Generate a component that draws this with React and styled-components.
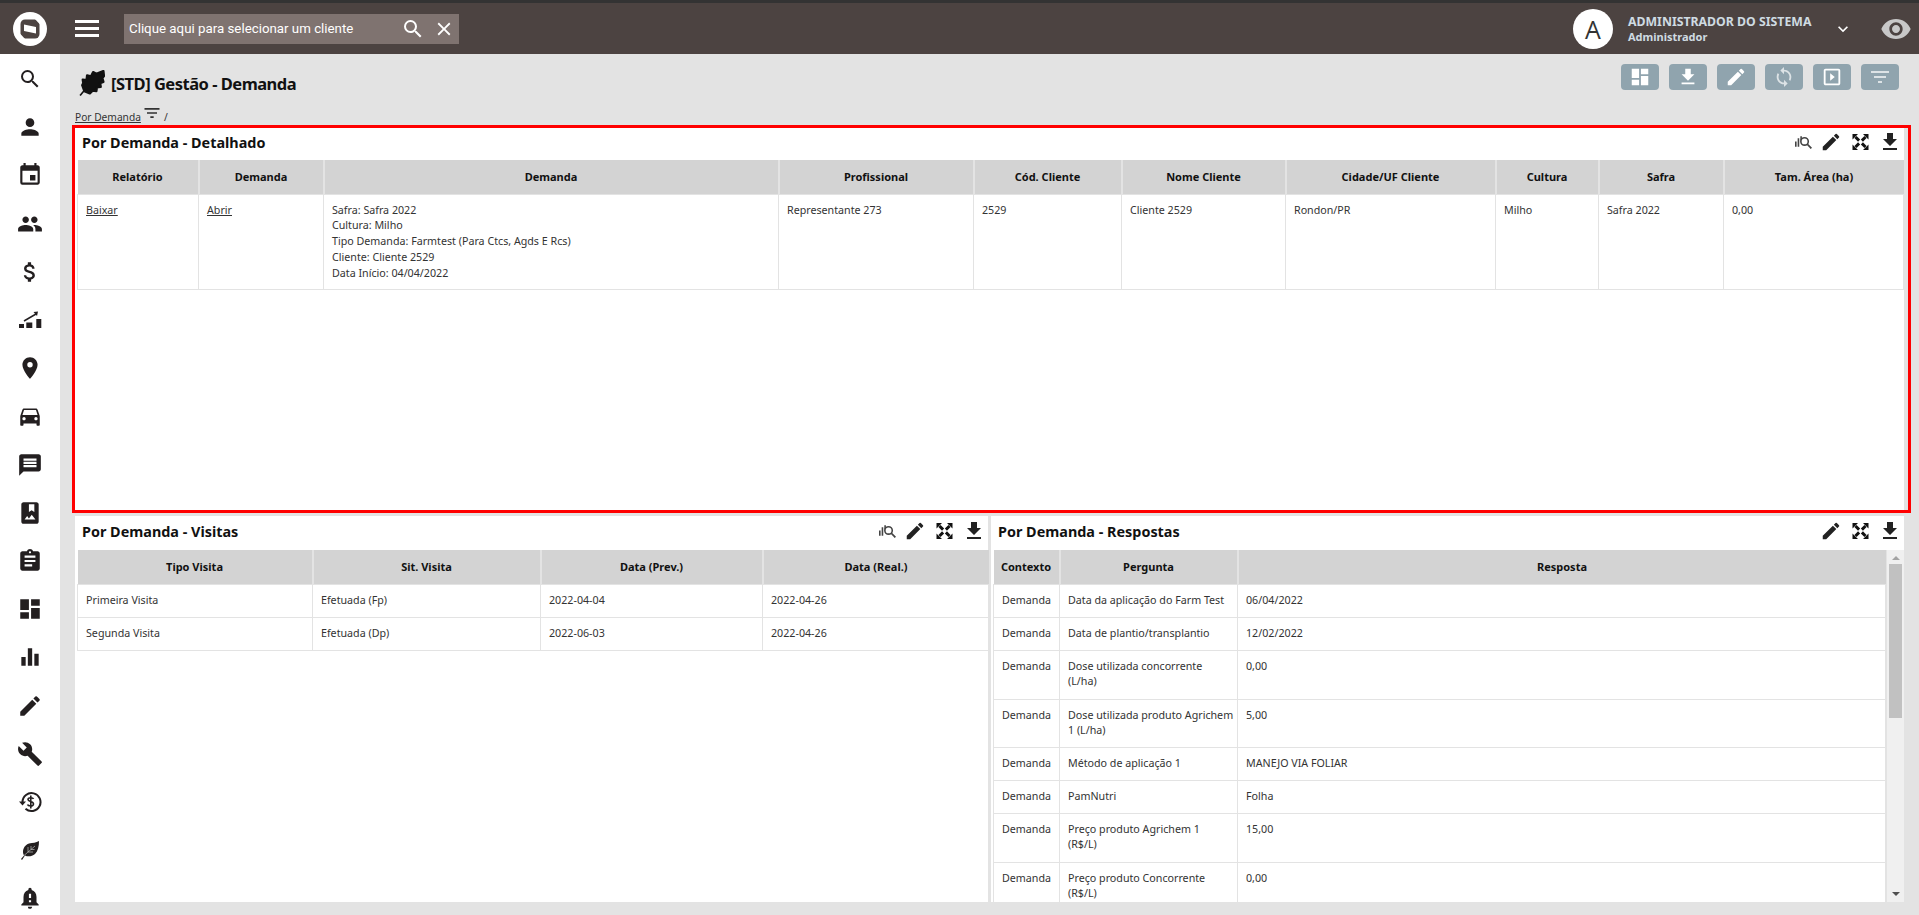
import React from 'react';
import styled, { createGlobalStyle } from 'styled-components';
import {
  MdSearch, MdClose, MdPerson, MdEvent, MdPeople, MdAttachMoney, MdPlace, MdDirectionsCar, MdMessage,
  MdPhotoAlbum, MdAssignment, MdDashboard, MdEqualizer, MdEdit, MdBuild, MdNotificationImportant,
  MdFileDownload, MdSync, MdOutlineSlideshow, MdFilterList, MdVisibility, MdKeyboardArrowDown,
} from 'react-icons/md';

const GlobalStyle = createGlobalStyle`
  html, body { margin: 0; height: 100%; overflow: hidden; background: #e3e3e3; }
  * { box-sizing: border-box; }
  body { font-family: "Noto Sans", "DejaVu Sans", sans-serif; font-size: 10.7px; color: #222; }
`;

const Page = styled.div`
  width: 1919px;
  height: 915px;
  display: flex;
  flex-direction: column;
  overflow: hidden;
`;

const Topbar = styled.header`
  height: 54px;
  flex: none;
  display: flex;
  align-items: center;
  background: #4c4341;
  border-top: 3px solid #333;
  padding: 0 7px 0 13px;
`;

const Burger = styled.div`
  width: 24px;
  height: 17px;
  margin-left: 28px;
  margin-right: 25px;
  border-top: 3px solid #fff;
  border-bottom: 3px solid #fff;
  display: flex;
  align-items: center;
  &::before { content: ''; display: block; width: 100%; height: 3px; background: #fff; }
`;

const SearchBox = styled.div`
  width: 335px;
  height: 30px;
  background: #7f7370;
  display: flex;
  align-items: center;
  padding: 0 4px 0 5px;
  color: #fff;
  font-family: Roboto, "Liberation Sans", sans-serif;
  font-size: 13.3px;
  span { flex: 1; }
  svg { margin-left: 8px; }
`;

const UserArea = styled.div`
  margin-left: auto;
  display: flex;
  align-items: center;
`;

const Avatar = styled.div`
  width: 40px;
  height: 40px;
  border-radius: 50%;
  background: #fff;
  color: #333;
  display: flex;
  align-items: center;
  justify-content: center;
  font-family: "Open Sans", sans-serif;
  font-size: 25px;
  margin-right: 15px;
`;

const UserText = styled.div`
  width: 205px;
  color: #cfdbe2;
  font-weight: 700;
  line-height: 15px;
  font-size: 12.3px;
  small { display: block; font-size: 11px; }
`;

const Body = styled.div`
  flex: 1;
  display: flex;
  min-height: 0;
`;

const Sidebar = styled.nav`
  width: 60px;
  flex: none;
  background: #fff;
  padding-top: 1px;
  overflow: hidden;
`;

const SideItem = styled.div`
  height: 48.2px;
  display: flex;
  align-items: center;
  justify-content: center;
  color: #231f20;
`;

const Main = styled.main`
  flex: 1;
  min-width: 0;
  padding: 10px 15px 0 15px;
  display: flex;
  flex-direction: column;
`;

const TitleRow = styled.div`
  height: 26px;
  display: flex;
  align-items: flex-start;
  padding-left: 4px;
`;

const Heading = styled.div`
  display: flex;
  align-items: center;
  height: 26px;
  margin-top: 6px;
`;

const Title = styled.h1`
  margin: 0 0 0 6px;
  font-size: 16.5px;
  font-weight: 700;
  color: #111;
  letter-spacing: -0.5px;
  white-space: nowrap;
`;

const ActionBar = styled.div`
  margin-left: auto;
  margin-right: 5px;
  display: flex;
  gap: 10px;
`;

const ActionButton = styled.div`
  width: 38px;
  height: 26px;
  border-radius: 4px;
  background: #90a4ae;
  color: #fff;
  display: flex;
  align-items: center;
  justify-content: center;
`;

const Crumb = styled.div`
  height: 38px;
  padding: 16px 0 0 0;
  display: flex;
  align-items: flex-start;
  font-size: 10.2px;
  color: #333;
  u { margin-top: 4px; }
  span { margin-top: 4px; margin-left: 2px; }
  svg { margin-left: 1px; margin-top: -3px; }
`;

const Panels = styled.div`
  flex: 1;
  min-height: 0;
  display: flex;
  flex-direction: column;
  gap: 6px;
  margin-bottom: 13px;
`;

const Panel = styled.section`
  position: relative;
  background: #fff;
  display: flex;
  flex-direction: column;
  min-width: 0;
  min-height: 0;
  padding: 0 0 0 2px;
  overflow: ${p => (p.$clip ? 'hidden' : 'visible')};
  flex: ${p => p.$flex || '1'};
`;

const RedFrame = styled.div`
  position: absolute;
  inset: -3px -7px -3px -3px;
  border: 3px solid #f00;
  pointer-events: none;
`;

const LowerRow = styled.div`
  flex: 1;
  min-height: 0;
  display: flex;
  gap: 3px;
`;

const PanelHead = styled.div`
  height: ${p => p.$h || 34}px;
  flex: none;
  display: flex;
  align-items: center;
  padding: 0 2px 4px 5px;
`;

const PanelTitle = styled.h2`
  margin: 0;
  font-size: 14.4px;
  font-weight: 700;
  color: #111;
  flex: 1;
`;

const PanelTools = styled.div`
  display: flex;
  align-items: center;
  gap: 8px;
  color: #222;
`;

const Table = styled.table`
  border-collapse: collapse;
  table-layout: fixed;
  width: ${p => p.$w}px;
  font-size: 10.7px;
  color: #333;
  th {
    height: 34px;
    background: #d3d3d3;
    color: #111;
    font-weight: 700;
    font-size: 11px;
    text-align: center;
    padding: 0 4px;
    border-left: 2px solid #e3e3e3;
    border-bottom: 1px solid #e3e3e3;
  }
  th:first-child { border-left: 0; }
  td {
    padding: 8px 3px 0 8px;
    vertical-align: top;
    line-height: 15.75px;
    white-space: pre-line;
    height: ${p => p.$rowH || 33}px;
    border: 1px solid #e3e3e3;
    border-top: 0;
  }
  td u { color: #333; }
`;

const Scroller = styled.div`
  flex: 1;
  min-height: 0;
  display: flex;
  overflow: hidden;
`;

const TableClip = styled.div`
  overflow: hidden;
`;

const Scrollbar = styled.div`
  width: 18px;
  flex: none;
  background: #f0f0f0;
  border-left: 1px solid #e3e3e3;
  display: flex;
  flex-direction: column;
  align-items: center;
  &::before { content: ''; margin-top: 6px; border: 4px solid transparent; border-top: 0; border-bottom: 4px solid #a3a3a3; }
  &::after { content: ''; margin-top: auto; margin-bottom: 6px; border: 4px solid transparent; border-bottom: 0; border-top: 4px solid #505050; }
`;

const Thumb = styled.div`
  width: 13px;
  height: 154px;
  background: #c1c1c1;
  margin-top: 4px;
`;

// logo da totvs
const Logo = () => (
  <svg width="34" height="34" viewBox="0 0 34 34">
    <circle cx="17" cy="17" r="17" fill="#fff" />
    <rect x="7.500" y="7.500" width="19" height="19" rx="4.500" fill="#4c4341" />
    <path d="M11 12.500l12 2.500v6.500l-12-2.500z" fill="#fff" />
    <path d="M21 6l6.500 0 0 7zM13 28l-6.500 0 0-7z" fill="#fff" />
  </svg>
);

const Leaf = ({ size = 24 }) => (
  <svg width={size} height={size} viewBox="0 0 24 24" fill="#111" stroke="#111" strokeLinejoin="round">
    <path d="M6 17.500L1 23.500" strokeWidth="1.500" fill="none" />
    <path d="M5 19.500L3 14l1-2-.5-3 3.500.5L7.500 5l3.500 1L13 2l3 1.500L22.500 1l.5 4.500-1.500 2 1 3.500-3 1 .5 3.500-3.500 .5-.5 3.500-3.500-.5L10 21.500z" strokeWidth="2.200" />
  </svg>
);

const SideLeaf = () => (
  <svg width="20" height="20" viewBox="0 0 20 20">
    <path d="M1 19l3-3.500C1.500 11 4 5 9 3.500 13 2.500 16 3 19 1c0 5-1 10-4 13-3 2.500-7 3-10 1.500L2 20z" fill="#231f20" />
    <path d="M4 15.500L15 6M8 12V7M8 12h5M11 9.500V6M11 9.500h3.500" stroke="#bbb" strokeWidth=".7" fill="none" />
  </svg>
);

const TrendIcon = () => (
  <svg width="24" height="24" viewBox="0 0 24 24" fill="#231f20">
    <path d="M1 16h5v4H1zM8.300 14.500h6V20h-6zM18.300 11h5v9h-5z" />
    <path d="M6 13l12-7" stroke="#231f20" strokeWidth="1.500" fill="none" />
    <path d="M15.500 4l4.500-.5-1 4.500z" />
  </svg>
);

const HistoryMoney = () => (
  <svg width="24" height="24" viewBox="0 0 24 24" fill="none" stroke="#231f20" strokeWidth="2">
    <path d="M4.500 12a9 9 0 1 1 3 6.800" />
    <path d="M1 11.500h7L4.500 15.500z" fill="#231f20" stroke="none" />
    <path d="M15.500 9c-.5-1.500-5.500-2-5.500.5s5.500 1.500 5.500 4.500-5.500 2-6 .5M12.800 5.500v13" strokeWidth="1.600" />
  </svg>
);

const StatsSearch = () => (
  <svg width="17" height="17" viewBox="0 0 16 16" fill="#444">
    <path d="M0 7h1.500v5H0zM2.500 4H4v8H2.500zM5 2h1.500v2.500A4 4 0 0 0 5 7z" />
    <circle cx="9" cy="7" r="3.500" fill="none" stroke="#444" strokeWidth="1.500" />
    <path d="M11 10l1-1 4 4-1.200 1.200z" />
  </svg>
);

// setas em X do botao de expandir
const ExpandIcon = () => (
  <svg width="20" height="22" viewBox="0.5 0 20 22" fill="#111" stroke="#111">
    <path d="M6 6l3.600 3.600M16 6l-3.600 3.600M6 16l3.600-3.600M16 16l-3.600-3.600" strokeWidth="3" fill="none" />
    <path d="M3 3h5.500L3 8.500zM19 3v5.500L13.500 3zM3 19v-5.500L8.500 19zM19 19h-5.500L19 13.500z" stroke="none" />
  </svg>
);

const sideIcons = [
  <MdSearch size={24} />, <MdPerson size={26} />, <MdEvent size={26} />, <MdPeople size={26} />,
  <MdAttachMoney size={26} />, <TrendIcon />, <MdPlace size={26} />, <MdDirectionsCar size={26} />,
  <MdMessage size={26} />, <MdPhotoAlbum size={26} />, <MdAssignment size={26} />, <MdDashboard size={26} />,
  <MdEqualizer size={26} />, <MdEdit size={26} />, <MdBuild size={26} />, <HistoryMoney />,
  <SideLeaf />, <MdNotificationImportant size={26} />,
];

const detailCols = [121, 125, 455, 195, 148, 164, 210, 103, 125, 180];
const visitCols = [235, 228, 222, 226];
const answerCols = [66, 178, 648];

const answers = [
  ['Demanda', 'Data da aplicação do Farm Test', '06/04/2022', 33],
  ['Demanda', 'Data de plantio/transplantio', '12/02/2022', 33],
  ['Demanda', 'Dose utilizada concorrente\n(L/ha)', '0,00', 49],
  ['Demanda', 'Dose utilizada produto Agrichem\n1 (L/ha)', '5,00', 48],
  ['Demanda', 'Método de aplicação 1', 'MANEJO VIA FOLIAR', 33],
  ['Demanda', 'PamNutri', 'Folha', 32],
  ['Demanda', 'Preço produto Agrichem 1\n(R$/L)', '15,00', 49],
  ['Demanda', 'Preço produto Concorrente\n(R$/L)', '0,00', 49],
];

const Cols = ({ widths }) => (
  <colgroup>
    {widths.map((w, i) => <col key={i} style={{ width: w }} />)}
  </colgroup>
);

const Tools = ({ stats = true }) => (
  <PanelTools>
    {stats && <StatsSearch />}
    <MdEdit size={22} />
    <ExpandIcon />
    <MdFileDownload size={24} />
  </PanelTools>
);

export default function App() {
  return (
    <Page>
      <GlobalStyle />
      <Topbar>
        <Logo />
        <Burger />
        <SearchBox>
          <span>Clique aqui para selecionar um cliente</span>
          <MdSearch size={24} />
          <MdClose size={22} />
        </SearchBox>
        <UserArea>
          <Avatar>A</Avatar>
          <UserText>
            ADMINISTRADOR DO SISTEMA
            <small>Administrador</small>
          </UserText>
          <MdKeyboardArrowDown size={20} color="#fff" />
          <MdVisibility size={32} color="#c8c8c8" style={{ marginLeft: 27 }} />
        </UserArea>
      </Topbar>
      <Body>
        <Sidebar>
          {sideIcons.map((icon, i) => <SideItem key={i}>{icon}</SideItem>)}
        </Sidebar>
        <Main>
          <TitleRow>
            <Heading>
              <Leaf size={26} />
              <Title>[STD] Gestão - Demanda</Title>
            </Heading>
            <ActionBar>
              <ActionButton><MdDashboard size={22} /></ActionButton>
              <ActionButton><MdFileDownload size={22} /></ActionButton>
              <ActionButton><MdEdit size={22} /></ActionButton>
              <ActionButton><MdSync size={22} color="#dde3e6" /></ActionButton>
              <ActionButton><MdOutlineSlideshow size={22} /></ActionButton>
              <ActionButton><MdFilterList size={24} color="#dde3e6" /></ActionButton>
            </ActionBar>
          </TitleRow>
          <Crumb>
            <u>Por Demanda</u>
            <MdFilterList size={20} />
            <span>/</span>
          </Crumb>
          <Panels>
            <Panel $flex="0 0 382px">
              <PanelHead $h={32}>
                <PanelTitle>Por Demanda - Detalhado</PanelTitle>
                <Tools />
              </PanelHead>
              <Table $w={1826} $rowH={95}>
                <Cols widths={detailCols} />
                <thead>
                  <tr>
                    <th>Relatório</th><th>Demanda</th><th>Demanda</th><th>Profissional</th><th>Cód. Cliente</th>
                    <th>Nome Cliente</th><th>Cidade/UF Cliente</th><th>Cultura</th><th>Safra</th><th>Tam. Área (ha)</th>
                  </tr>
                </thead>
                <tbody>
                  <tr>
                    <td><u>Baixar</u></td>
                    <td><u>Abrir</u></td>
                    <td>{'Safra: Safra 2022\nCultura: Milho\nTipo Demanda: Farmtest (Para Ctcs, Agds E Rcs)\nCliente: Cliente 2529\nData Início: 04/04/2022'}</td>
                    <td>Representante 273</td>
                    <td>2529</td>
                    <td>Cliente 2529</td>
                    <td>Rondon/PR</td>
                    <td>Milho</td>
                    <td>Safra 2022</td>
                    <td>0,00</td>
                  </tr>
                </tbody>
              </Table>
              <RedFrame />
            </Panel>
            <LowerRow>
              <Panel>
                <PanelHead>
                  <PanelTitle>Por Demanda - Visitas</PanelTitle>
                  <Tools />
                </PanelHead>
                <Table $w={911}>
                  <Cols widths={visitCols} />
                  <thead>
                    <tr><th>Tipo Visita</th><th>Sit. Visita</th><th>Data (Prev.)</th><th>Data (Real.)</th></tr>
                  </thead>
                  <tbody>
                    <tr><td>Primeira Visita</td><td>Efetuada (Fp)</td><td>2022-04-04</td><td>2022-04-26</td></tr>
                    <tr><td>Segunda Visita</td><td>Efetuada (Dp)</td><td>2022-06-03</td><td>2022-04-26</td></tr>
                  </tbody>
                </Table>
              </Panel>
              <Panel $clip>
                <PanelHead>
                  <PanelTitle>Por Demanda - Respostas</PanelTitle>
                  <Tools stats={false} />
                </PanelHead>
                <Scroller>
                  <TableClip>
                    <Table $w={892}>
                      <Cols widths={answerCols} />
                      <thead>
                        <tr><th>Contexto</th><th>Pergunta</th><th>Resposta</th></tr>
                      </thead>
                      <tbody>
                        {answers.map(([ctx, q, a, h], i) => (
                          <tr key={i} style={{ height: h }}>
                            <td>{ctx}</td><td>{q}</td><td>{a}</td>
                          </tr>
                        ))}
                      </tbody>
                    </Table>
                  </TableClip>
                  <Scrollbar><Thumb /></Scrollbar>
                </Scroller>
              </Panel>
            </LowerRow>
          </Panels>
        </Main>
      </Body>
    </Page>
  );
}
